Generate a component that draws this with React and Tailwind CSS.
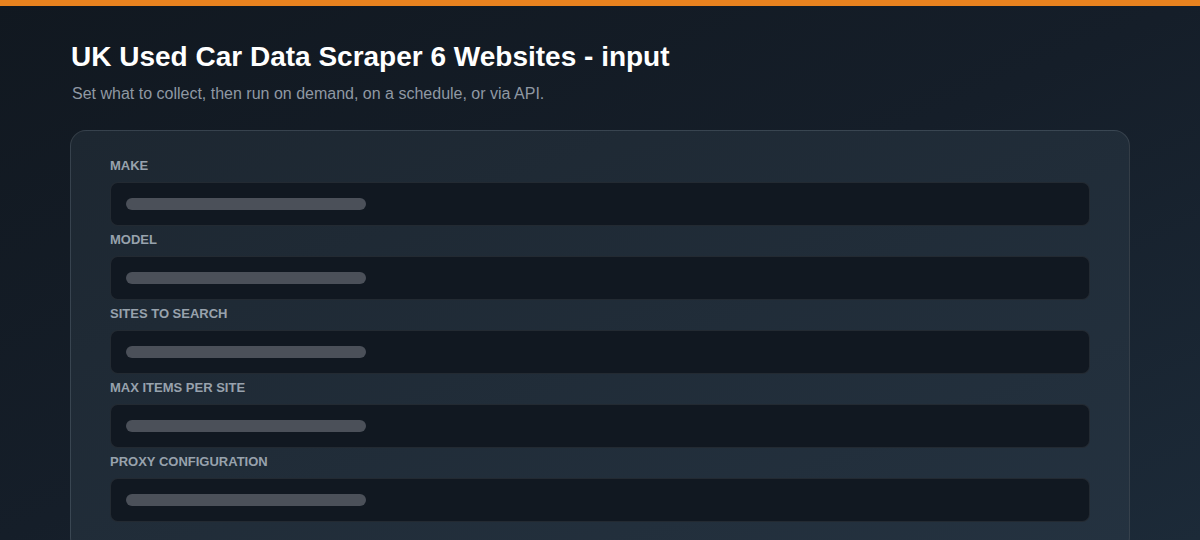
const fields = ['Make', 'Model', 'Sites to search', 'Max items per site', 'Proxy configuration'];

export default function App() {
    return (
        <div className="w-[1200px] h-[540px] overflow-hidden bg-gradient-to-br from-[#111820] via-[#151e29] to-[#1c2a38] font-['Liberation_Sans',Arial,sans-serif]">
            <div className="h-[6px] bg-[#e8821f]" />
            <div className="px-[70px]">
                <h1 className="mt-[35px] ml-[1px] text-[28px] leading-[32px] font-bold text-white">UK Used Car Data Scraper 6 Websites - input</h1>
                <p className="mt-[11px] ml-[2px] text-[16px] leading-[20px] text-[#8f98a3]">Set what to collect, then run on demand, on a schedule, or via API.</p>

                <div className="mt-[26px] rounded-[16px] border border-white/10 bg-gradient-to-br from-[#1d2731] to-[#243240] px-[39px] pt-[27px] pb-[30px] flex flex-col gap-[6px]">
                    {fields.map((f) => (
                        <div key={f}>
                            <label className="block text-[13px] leading-[16px] font-bold uppercase text-[#98a2ad] mb-[8px]">{f}</label>
                            <div className="h-[44px] rounded-[8px] border border-white/[0.08] bg-[#111821] flex items-center px-[15px]">
                                <div className="w-[240px] h-[12px] rounded-full bg-[#4b5059]" />
                            </div>
                        </div>
                    ))}
                </div>
            </div>
        </div>
    );
}
